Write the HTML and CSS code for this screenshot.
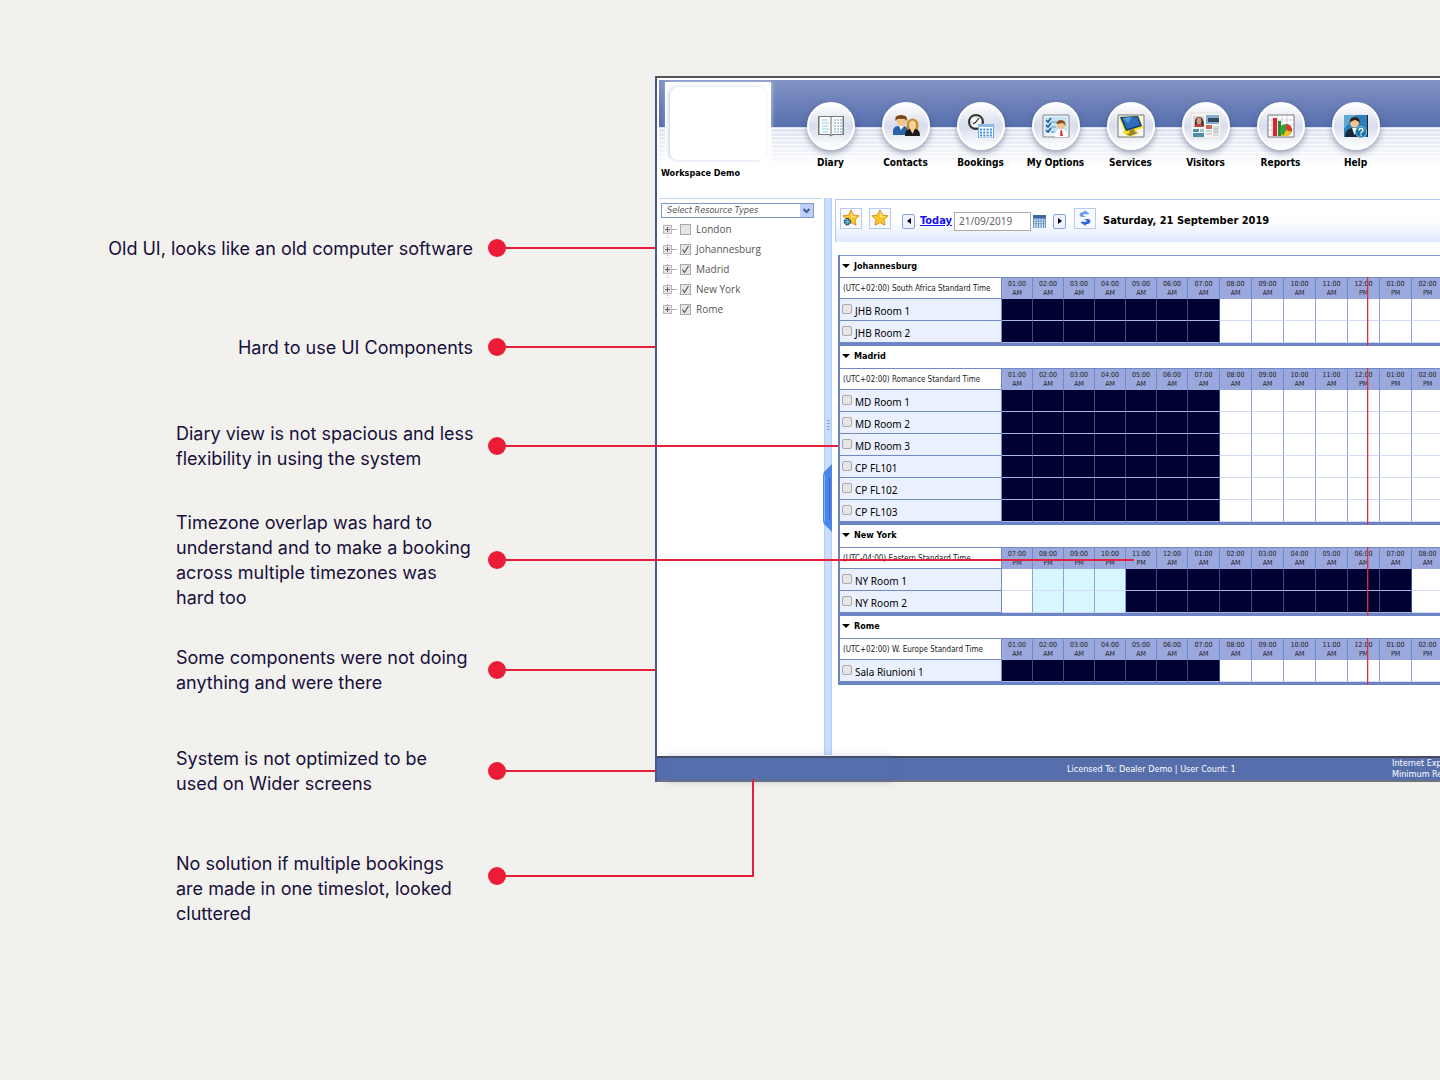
FILE: index.html
```html
<!DOCTYPE html>
<html lang="en">
<head>
<meta charset="utf-8">
<title>Workspace Demo – UI review</title>
<link rel="stylesheet" href="styles.css">
</head>
<body>
<div class="board">
  <ol class="notes">
    <li class="note note-right"><p>Old UI, looks like an old computer software</p><span class="pin"></span></li>
    <li class="note note-right"><p>Hard to use UI Components</p><span class="pin"></span></li>
    <li class="note"><p>Diary view is not spacious and less<br>flexibility in using the system</p><span class="pin pin-room"></span></li>
    <li class="note"><p>Timezone overlap was hard to<br>understand and to make a booking<br>across multiple timezones was<br>hard too</p><span class="pin pin-slot"></span></li>
    <li class="note"><p>Some components were not doing<br>anything and were there</p><span class="pin"></span></li>
    <li class="note"><p>System is not optimized to be<br>used on Wider screens</p><span class="pin"></span></li>
    <li class="note note-last"><p>No solution if multiple bookings<br>are made in one timeslot, looked<br>cluttered</p><span class="pin pin-up"></span></li>
  </ol>

  <div class="app">
    <header class="banner">
      <div class="brand"><div class="logo"></div><strong>Workspace Demo</strong></div>
      <nav class="menu">
        <a href="#diary"><span class="disc"><svg viewBox="0 0 28 24"><path d="M1 2h26v19H16l-2 1.500-2-1.500H1z" fill="#777"/><path d="M2.500 3H13v17H2.500zM15 3h10.500v17H15z" fill="#fdfdfb"/><path d="M13 3h2v18h-2z" fill="#b5b5b0"/><path d="M5 6h6M5 9h7M5 12h6M5 15h7M5 18h6" stroke="#8bd3ee"/><path d="M17 6h8M17 9h8M17 12h8M17 15h8M17 18h8" stroke="#6ba6c4" stroke-dasharray="2 1"/></svg></span>Diary</a>
        <a href="#contacts"><span class="disc"><svg viewBox="0 0 28 24"><path d="M1 21v-5q1-4 6-4h5q4 1 4 5v4z" fill="#2864ab"/><path d="M7 12l2 4 3-4z" fill="#fff"/><circle cx="9.500" cy="7" r="5" fill="#f1c58f"/><path d="M3.500 7Q2 1 9 1q7 0 6 6-2-3-6-2-4-1-5.500 2z" fill="#7b4216"/><path d="M15 16q-2-11 5.500-11.500Q28 5 26 16z" fill="#c98c22"/><ellipse cx="20.500" cy="11" rx="3.500" ry="4.500" fill="#f6d2a1"/><path d="M13 22q0-7 5-7l2.500 4 2.500-4q5 0 5 7z" fill="#1b1b1b"/><path d="M18.500 15h4l-2 5z" fill="#f4c995"/></svg></span>Contacts</a>
        <a href="#bookings"><span class="disc"><svg viewBox="0 0 28 24"><circle cx="9" cy="8" r="7" fill="#f9f9f9" stroke="#333" stroke-width="2"/><path d="M9 8l3-4M6 10l3-2" stroke="#222" stroke-width="1.200"/><path d="M9 2.500v1M9 13v1M3.500 8h1M14 8h1" stroke="#555"/><path d="M11.500 11h15v13h-15z" fill="#fff" stroke="#6ba4dc"/><path d="M11 10h16v3H11z" fill="#8dbbe8"/><path d="M13 15.500h12M13 18.500h12M13 21.500h12" stroke="#3f8bd0" stroke-width="2" stroke-dasharray="2 1.300"/></svg></span>Bookings</a>
        <a href="#options"><span class="disc"><svg viewBox="0 0 28 24"><path d="M1 1h26v22H1z" fill="#e9f3fa" stroke="#85888c"/><path d="M3 3h22v16H3z" fill="#c6e3f4"/><path d="M4 6l2 2 3-4M4 11l2 2 3-4M4 16l2 2 3-4" fill="none" stroke="#1d5a90" stroke-width="1.500"/><path d="M9 8h6M9 13h5M9 18h4" stroke="#6797b8"/><path d="M13 23q0-8 5-8h2q6 1 6 8z" fill="#fff"/><path d="M18.500 16h1.500l1 6h-3z" fill="#d7354a"/><circle cx="19" cy="11" r="4" fill="#f3c491"/><path d="M14.500 10q0-4 4.500-4 5 0 4.500 6-1-2-3-3-3 1-6 1z" fill="#8c5222"/></svg></span>My Options</a>
        <a href="#services"><span class="disc"><svg viewBox="0 0 28 24"><path d="M1 1h26v22H1z" fill="#f7f7f0" stroke="#777"/><path d="M2 3l20-1 4 12-7 2 2 3-8 4-7-4 1-3z" fill="#f5e31c"/><path d="M3 3l18-1 4 10-16 5z" fill="#163c70"/><path d="M5 4l15-1 3 8-13 4z" fill="#2e6cbd"/><path d="M6 4l9-1-4 6z" fill="#5a9be0"/><path d="M12 16l5-1 1 3 3 1-8 3-4-2 4-1z" fill="#9b8434"/></svg></span>Services</a>
        <a href="#visitors"><span class="disc"><svg class="wide" viewBox="0 0 32 28"><path d="M1 1h30v25H1z" fill="#f6f6f3" stroke="#ddd"/><path d="M3 4h11v11H3z" fill="#d9d6d3"/><path d="M5 14Q4 5 9 5t5 9z" fill="#4e2b24"/><ellipse cx="9" cy="9" rx="2.500" ry="3.500" fill="#d49a84"/><path d="M4 15q1-3 5-3t5 3z" fill="#b4434a"/><path d="M3 17h6v3H3zM3 21h11v4H3z" fill="#4b8cab"/><path d="M10 17h4v3h-4z" fill="#9ac0d2"/><path d="M16 3h13v9H16z" fill="#84abd0"/><path d="M18 6h11v4H18z" fill="#33485a"/><path d="M16 13h6v4h-6z" fill="#cc675b"/><path d="M23 14h6v10h-6z" fill="#d7dfda"/><path d="M16 19h6M16 22h6M24 17h4M24 20h4" stroke="#a8b5b7"/></svg></span>Visitors</a>
        <a href="#reports"><span class="disc"><svg viewBox="0 0 28 24"><path d="M1 1h26v22H1z" fill="#fff" stroke="#777"/><path d="M2 6h24M2 11h24M2 16h24M5 2v20M10 2v20M15 2v20M20 2v20" stroke="#cfcfcf"/><path d="M6 4h4v18H6z" fill="#d9262b"/><path d="M11 7h3v15h-3z" fill="#278b3c"/><path d="M14 11h2v11h-2z" fill="#f0b528"/><circle cx="19" cy="16" r="6" fill="#36a13b"/><path d="M19 16V10a6 6 0 0 1 5.500 8z" fill="#de392d"/><path d="M19 16l5.500 2a6 6 0 0 1-8 3.500z" fill="#f3bd22"/></svg></span>Reports</a>
        <a href="#help"><span class="disc"><svg viewBox="0 0 28 24"><path d="M2 1h23v22H2z" fill="#2c7fbc"/><path d="M2 1h12L2 15z" fill="#5ca9d8"/><path d="M25 1h1v22h-1z" fill="#222"/><path d="M3 23q0-8 7-9h5q6 2 6 9z" fill="#17283c"/><path d="M10 14h5l-2.500 7z" fill="#fff"/><circle cx="12.500" cy="9" r="4.500" fill="#f2c491"/><path d="M7.500 9q0-6 5-6 6 0 5 6-2-3-5-3-3 1-5 3z" fill="#342216"/><circle cx="19" cy="18" r="5.500" fill="#1976a9" stroke="#7ec2e2"/><path d="M17 16.500q0-2 2-2t2 1.700q0 1.300-2 2.300v1M19 20.500v1.300" fill="none" stroke="#fff" stroke-width="1.300"/></svg></span>Help</a>
      </nav>
    </header>

    <div class="workspace">
      <aside class="sidebar">
        <select class="types" aria-label="Resource types"><option>Select Resource Types</option></select>
        <ul class="tree">
          <li><button class="expand" aria-label="Expand London"></button><label><input type="checkbox">London</label></li>
          <li><button class="expand" aria-label="Expand Johannesburg"></button><label><input type="checkbox" checked>Johannesburg</label></li>
          <li><button class="expand" aria-label="Expand Madrid"></button><label><input type="checkbox" checked>Madrid</label></li>
          <li><button class="expand" aria-label="Expand New York"></button><label><input type="checkbox" checked>New York</label></li>
          <li><button class="expand" aria-label="Expand Rome"></button><label><input type="checkbox" checked>Rome</label></li>
        </ul>
      </aside>
      <div class="splitter">
        <svg class="grip" viewBox="0 0 9 68"><path d="M9 0v68L1 60Q0 58 0 56V12q0-2 1-4z" fill="#4d84e8"/><path d="M6.500 14v41" stroke="#2f63cb"/><path d="M1.500 11v46" stroke="#88b0f4"/></svg>
      </div>
      <main class="content">
        <div class="toolbar">
          <button class="tool" aria-label="Add favourite"><svg viewBox="0 0 20 20"><path d="M10 1l2.700 5.800 6.300.700-4.600 4.400 1.200 6.200L10 15l-5.600 3.100 1.200-6.200L1 7.500l6.300-.700z" fill="#fcc624" stroke="#d58c18"/><path d="M10 3l1.800 4.500 4.200.500-6 2z" fill="#ffe680"/><path d="M6 10v8M2 14h8" stroke="#23506f" stroke-width="4"/><path d="M6 11v6M3 14h6" stroke="#69b5dc" stroke-width="2"/></svg></button>
          <button class="tool" aria-label="Favourites"><svg viewBox="0 0 20 20"><path d="M10 1l2.700 5.800 6.300.700-4.600 4.400 1.200 6.200L10 15l-5.600 3.100 1.200-6.200L1 7.500l6.300-.700z" fill="#fcc624" stroke="#d58c18"/><path d="M10 3l1.800 4.500 4.200.500-6 2z" fill="#ffe680"/></svg></button>
          <div class="dates">
            <button class="step" aria-label="Previous day"><svg viewBox="0 0 4 6"><path d="M4 0v6L0 3z"/></svg></button>
            <a class="today" href="#today">Today</a>
            <input class="date" type="text" value="21/09/2019" aria-label="Date">
            <button class="calendar" aria-label="Open calendar"><svg viewBox="0 0 13 13"><path d="M0 0h13v13H0z" fill="#6f95c4"/><path d="M0 0h13v3H0z" fill="#3d659f"/><path d="M1 5h11M1 7.500h11M1 10h11M1 12h11" stroke="#e8f1fb" stroke-width="1.500" stroke-dasharray="1.500 1"/></svg></button>
            <button class="step" aria-label="Next day"><svg viewBox="0 0 4 6"><path d="M0 0v6l4-3z"/></svg></button>
          </div>
          <button class="tool" aria-label="Refresh"><svg viewBox="0 0 20 20"><path d="M4 7q0-4 5-4V1l6 4-2 1q-5-1-5 1l3 2H7Q4 9 4 7z" fill="#6f9cf0"/><path d="M16 13q0 4-5 4v2l-6-4 2-1q5 1 5-1l-3-2h4q3 0 3 2z" fill="#2f65d8"/></svg></button>
          <h1>Saturday, 21 September 2019</h1>
        </div>
        <div class="diary" id="diary"></div>
      </main>
    </div>

    <footer class="status">
      <span>Licensed To: Dealer Demo | User Count: 1</span>
      <span>Internet Explorer<br>Minimum Resolution</span>
    </footer>
  </div>
</div>
<script src="diary.js"></script>
</body>
</html>
```
FILE: styles.css
```css
* { box-sizing: border-box; }

body {
  margin: 0;
  background: #f2f1ed;
  color: #000;
  font: 10px/12px "DejaVu Sans Condensed", "Noto Sans", sans-serif;
  overflow-x: hidden;
}

button { padding: 0; cursor: pointer; }

.board {
  display: grid;
  grid-template-columns: 655px minmax(0, 1fr);
  align-items: start;
  min-height: 100vh;
}

/* Annotations */
.notes {
  position: relative;
  z-index: 2;
  display: grid;
  grid-template-rows: 100px 98px 100px 128px 92px 110px 124px;
  margin: 0;
  padding: 198px 149px 0 0;
  list-style: none;
  color: #170f3c;
  font: 18px/25px Inter, sans-serif;
}
.note {
  display: grid;
  grid-template-columns: 297px 18px;
  column-gap: 15px;
  justify-content: end;
  align-items: center;
}
.note-right { grid-template-columns: 1fr 18px; text-align: right; }
.note p { margin: 0; white-space: nowrap; }
.pin {
  position: relative;
  height: 18px;
  border-radius: 50%;
  background: #ec1c36;
}
.pin::after {
  content: "";
  position: absolute;
  top: 8px;
  left: 9px;
  width: 158px;
  height: 2px;
  background: #e61f3a;
}
.pin-room::after { width: 341px; }
.pin-slot::after { width: 637px; }
.note-last .pin { align-self: start; margin-top: 41px; }
.pin-up::after {
  top: auto;
  bottom: 8px;
  width: 255px;
  height: 96px;
  background: none;
  border: solid #e61f3a;
  border-width: 0 2px 2px 0;
}

/* Application window */
.app {
  min-width: 0;
  margin-top: 76px;
  border: solid #50535e;
  border-width: 2px 0 0;
  border-left: 2px solid #46598f;
  background: #fff;
}
.banner {
  display: flex;
  height: 118px;
  margin: 2px 0 0 2px;
  background:
    linear-gradient(#8292c4, #566fad) 0 0 / 100% 47px no-repeat,
    linear-gradient(rgba(255,255,255,0) 47px, #fff 86px),
    repeating-linear-gradient(#fafbfd 0 1px, #dde2f0 1px 4px);
}
.brand { flex: 0 0 134px; font-size: 9px; line-height: 16px; }
.brand strong { padding-left: 2px; white-space: nowrap; }
.logo {
  width: 106px;
  height: 83px;
  margin: 2px 0 0 6px;
  padding: 5px;
  background: #fff;
  box-shadow: 1px 0 4px rgba(255,255,255,.5);
}
.logo::before {
  content: "";
  display: block;
  height: 73px;
  border-radius: 8px;
  box-shadow: -2px 0 3px #d3ddf0, 0 0 4px #e8ecf6;
}
.menu { display: flex; padding-top: 22px; }
.menu a {
  display: flex;
  flex-direction: column;
  align-items: center;
  gap: 6px;
  width: 75px;
  color: #000;
  font-size: 10px;
  font-weight: bold;
  line-height: 14px;
  text-decoration: none;
  white-space: nowrap;
}
.disc {
  display: grid;
  place-items: center;
  width: 48px;
  height: 48px;
  border: 2px solid #fff;
  border-radius: 50%;
  background: linear-gradient(#fff, #d8dcec 50%, #fff);
  box-shadow: 0 3px 6px rgba(60,70,110,.5);
}
.disc svg { width: 28px; height: 24px; }
.disc .wide { width: 32px; height: 28px; }

.workspace {
  display: grid;
  grid-template-columns: 165px 8px minmax(0, 1fr);
  column-gap: 2px;
  min-height: 558px;
}
.sidebar { margin-left: 2px; padding: 4px 8px 0 2px; border-top: 1px solid #c8d5f1; }
.types {
  display: block;
  appearance: none;
  width: 100%;
  height: 15px;
  padding: 0 5px;
  border: 1px solid #7f97cf;
  border-radius: 0;
  background:
    url("data:image/svg+xml,%3Csvg xmlns='http://www.w3.org/2000/svg' width='13' height='13'%3E%3Cpath d='M0 0h13v13H0z' fill='%23bdd0fa'/%3E%3Cpath d='M3.500 5l3 3 3-3' fill='none' stroke='%23415890' stroke-width='2'/%3E%3C/svg%3E") right center no-repeat #fff;
  color: #555;
  font: italic 9px/13px "DejaVu Sans Condensed", sans-serif;
}
.tree {
  margin: 1px 0 0;
  padding: 0 0 0 2px;
  list-style: none;
  color: #555;
  font: 10px/20px "Open Sans", sans-serif;
}
.tree li {
  display: flex;
  align-items: center;
  height: 20px;
  background: linear-gradient(#aaa, #aaa) 9px 10px / 5px 1px no-repeat;
}
.tree li:not(:last-child) {
  background:
    linear-gradient(#aaa, #aaa) 9px 10px / 5px 1px no-repeat,
    repeating-linear-gradient(#aaa 0 1px, transparent 1px 2px) 4px 10px / 1px 10px no-repeat;
}
.tree li:not(:first-child) .expand { box-shadow: 0 -5px 0 -4px #aaa; }
.expand {
  width: 9px;
  height: 9px;
  margin-right: 8px;
  border: 1px solid #bbb;
  background:
    linear-gradient(#666, #666) center / 5px 1px no-repeat,
    linear-gradient(#666, #666) center / 1px 5px no-repeat,
    #e4e4e4;
}
.tree label { display: flex; align-items: center; gap: 5px; }
input[type="checkbox"] {
  appearance: none;
  flex: none;
  width: 11px;
  height: 11px;
  margin: 0;
  border: 1px solid #a9a9a9;
  background: #e6e6e6;
}
.tree input:checked {
  background: url("data:image/svg+xml,%3Csvg xmlns='http://www.w3.org/2000/svg' width='9' height='9'%3E%3Cpath d='M1.500 4.500l2 3 4-6.500' fill='none' stroke='%23555' stroke-width='1.200'/%3E%3C/svg%3E") #e6e6e6;
}

.splitter {
  position: relative;
  margin-bottom: 1px;
  border: solid #b3cdf8;
  border-width: 0 1px;
  background: #c9defc;
}
.splitter::before {
  content: "";
  position: absolute;
  top: 222px;
  left: 2px;
  width: 3px;
  height: 11px;
  background: repeating-linear-gradient(#7fa3df 0 1px, transparent 1px 3px);
}
.grip { position: absolute; top: 266px; left: -2px; width: 9px; height: 68px; }

.content { margin-left: 1px; }
.toolbar {
  display: flex;
  align-items: center;
  height: 43px;
  margin-top: 1px;
  padding: 0 0 6px 4px;
  border: solid #b8c8ee;
  border-width: 1px 0 0 1px;
  background: linear-gradient(#fff 50%, #dfe9fe);
}
.tool {
  display: grid;
  place-items: center;
  width: 22px;
  height: 21px;
  margin-right: 7px;
  border: 1px solid #b9caf0;
  background: #f7faff;
}
.tool svg { width: 18px; height: 18px; }
.dates {
  display: flex;
  align-items: center;
  margin: 6px 8px 0 4px;
}
.step {
  display: grid;
  place-items: center;
  width: 13px;
  height: 15px;
  border: 1px solid #8aa6e0;
  border-radius: 2px;
  background: #eef3ff;
}
.step svg { width: 4px; height: 6px; }
.today {
  width: 39px;
  padding-left: 5px;
  color: #1410ee;
  font-size: 11px;
  font-weight: bold;
}
.date {
  width: 77px;
  height: 19px;
  padding: 0 4px;
  border: 1px solid #aaa;
  background: #fff;
  color: #666;
  font: 10px/16px "Noto Sans", sans-serif;
}
.calendar { width: 13px; height: 13px; margin: 0 7px 0 2px; border: 0; background: none; }
.calendar svg { display: block; }
.toolbar h1 { margin: 6px 0 0; font-size: 11px; line-height: 14px; white-space: nowrap; }

/* Diary grid */
.diary { margin: 13px 0 0 3px; overflow: hidden; }
.site {
  position: relative;
  border: solid #6c83c4;
  border-width: 0 0 3px 2px;
}
.site:first-child h2 { border-top: 1px solid #7f95cf; }
.site h2 {
  display: flex;
  align-items: center;
  gap: 4px;
  height: 22px;
  margin: 0;
  padding: 0 0 2px 2px;
  font-size: 9px;
}
.site h2::before {
  content: "";
  border: solid transparent;
  border-width: 4px 4px 0;
  border-top-color: #000;
}
.site table { table-layout: fixed; border-collapse: separate; border-spacing: 0; width: 100%; min-width: 604px; }
.site col.name { width: 162px; }
.site col.early { width: 31px; }
.site col.late { width: 32px; }
.site th, .site td { height: 22px; padding: 0; border: solid #7289c8; border-width: 0 1px 1px 0; }
.site thead th {
  border-width: 1px 1px 0 0;
  background: #9ba8dd;
  color: #222;
  font: 7px/9px "DejaVu Sans Condensed", sans-serif;
  text-align: center;
}
.site thead .zone {
  padding-left: 3px;
  background: #fff;
  font-size: 8px;
  text-align: left;
  white-space: nowrap;
  border-bottom: 1px solid #7289c8;
}
.site tbody th { background: #eaf0fe; font: 10px/12px "Noto Sans", sans-serif; text-align: left; }
.site tbody label { display: flex; align-items: center; gap: 3px; padding: 2px 0 0 2px; white-space: nowrap; }
.site tbody input { width: 10px; height: 10px; margin-bottom: 3px; border-radius: 2px; }
.site td { border-color: #d1dcf3; border-right-color: #8fa2d6; }
.site .closed { background: #000033; border-color: #a9b8de; border-right-color: #3a4c86; }
.site .open { background: #d8f6ff; }
.now {
  position: absolute;
  top: 22px;
  bottom: -3px;
  left: 527px;
  width: 2px;
  background: linear-gradient(90deg, #d0303f 50%, rgba(230,60,70,.3) 50%);
}

.status {
  position: relative;
  display: grid;
  grid-template-columns: 325px 1fr;
  align-items: center;
  height: 26px;
  padding-left: 410px;
  border: solid #454b5c;
  border-width: 2px 0;
  border-bottom-color: #70747f;
  background: #566eac;
  color: #fff;
  font: 9px/11px "DejaVu Sans Condensed", sans-serif;
  white-space: nowrap;
}
.status::before {
  content: "";
  position: absolute;
  top: 2px;
  left: 12px;
  width: 220px;
  height: 18px;
  background: #566eac;
  box-shadow: 0 0 7px 3px rgba(86,110,172,.4);
}
```
FILE: diary.js
```js
// Bookable rooms per site. Hours are counted from the first column:
// "open" and "closed" are [first, end) column ranges.
const sites = [
  { name: "Johannesburg", zone: "(UTC+02:00) South Africa Standard Time", start: 1, closed: [0, 7],
    rooms: ["JHB Room 1", "JHB Room 2"] },
  { name: "Madrid", zone: "(UTC+02:00) Romance Standard Time", start: 1, closed: [0, 7],
    rooms: ["MD Room 1", "MD Room 2", "MD Room 3", "CP FL101", "CP FL102", "CP FL103"] },
  { name: "New York", zone: "(UTC-04:00) Eastern Standard Time", start: 19, open: [1, 4], closed: [4, 13],
    rooms: ["NY Room 1", "NY Room 2"] },
  { name: "Rome", zone: "(UTC+02:00) W. Europe Standard Time", start: 1, closed: [0, 7],
    rooms: ["Sala Riunioni 1"] }
];
const columns = [...Array(14).keys()];
const within = (range, i) => range && i >= range[0] && i < range[1];

function hourLabel(hour) {
  const h = hour % 24;
  return String(h % 12 || 12).padStart(2, "0") + ":00<br>" + (h < 12 ? "AM" : "PM");
}

document.getElementById("diary").innerHTML = sites.map(site => `
  <section class="site">
    <h2>${site.name}</h2>
    <table>
      <colgroup><col class="name">${columns.map(i => `<col class="${i < 6 ? "early" : "late"}">`).join("")}</colgroup>
      <thead><tr><th class="zone">${site.zone}</th>${columns.map(i => `<th>${hourLabel(site.start + i)}</th>`).join("")}</tr></thead>
      <tbody>${site.rooms.map(room => `<tr><th><label><input type="checkbox">${room}</label></th>${columns.map(i =>
        `<td class="${within(site.closed, i) ? "closed" : within(site.open, i) ? "open" : ""}"></td>`).join("")}</tr>`).join("")}</tbody>
    </table>
    <span class="now"></span>
  </section>`).join("");
```
